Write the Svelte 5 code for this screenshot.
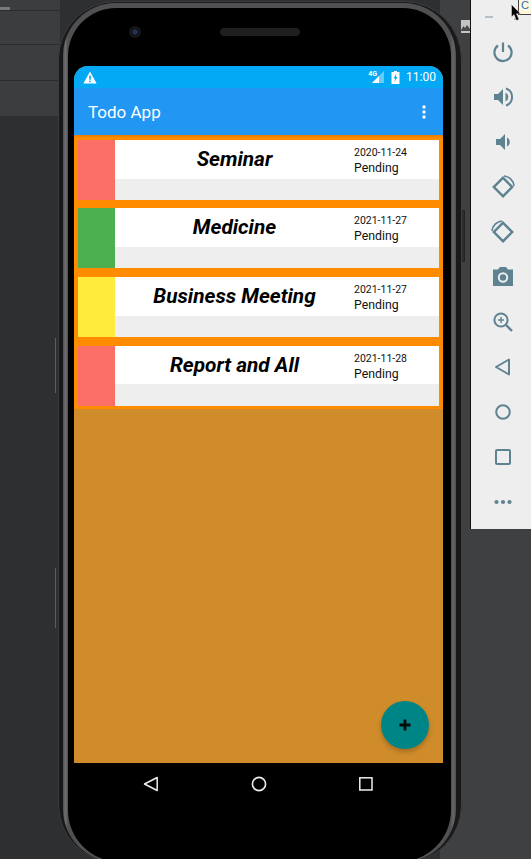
<script lang="ts">
  const todos = [
    { title: 'Seminar', date: '2020-11-24', status: 'Pending', color: '#fb6f66' },
    { title: 'Medicine', date: '2021-11-27', status: 'Pending', color: '#4caf50' },
    { title: 'Business Meeting', date: '2021-11-27', status: 'Pending', color: '#ffeb3b' },
    { title: 'Report and All', date: '2021-11-28', status: 'Pending', color: '#fb6f66' }
  ];
</script>

<div class="desktop">
  <div class="ide-left">
    <div class="ide-row corner"></div>
    <div class="ide-row"></div>
    <div class="ide-row"></div>
    <div class="ide-row last"></div>
  </div>
  <div class="ide-right">
    <div class="thumb">
      <svg width="9" height="13" viewBox="0 0 9 13">
        <path d="M0 10 L2.5 6 L4 8 L6 5 L9 9 V11 H0 Z" fill="#4a4a4c" />
      </svg>
    </div>
  </div>
  <span class="side-line one"></span>
  <span class="side-line two"></span>
  <span class="side-button"></span>

  <div class="phone">
    <div class="ring">
      <div class="bezel">
        <div class="earpiece-row">
          <span class="camera"></span>
          <span class="speaker"></span>
        </div>
        <div class="screen">
          <div class="statusbar">
            <svg class="warn" width="14" height="13" viewBox="0 0 14 13">
              <path d="M7 0.5 L13.6 12.5 H0.4 Z" fill="#fff" />
              <rect x="6.2" y="4.5" width="1.6" height="4.2" fill="#03a9f4" />
              <rect x="6.2" y="9.6" width="1.6" height="1.6" fill="#03a9f4" />
            </svg>
            <span class="spacer"></span>
            <span class="net">4G</span>
            <svg width="12" height="12" viewBox="0 0 12 12" class="signal">
              <path d="M12 0 V12 H0 Z" fill="#fff" opacity="0.4" />
              <path d="M7 5 V12 H0 Z" fill="#fff" />
            </svg>
            <svg width="9" height="13" viewBox="0 0 9 13" class="battery">
              <path d="M3 0 H6 V1 H8.5 V13 H0.5 V1 H3 Z" fill="#fff" />
              <path d="M5.3 2.5 L2.6 7.5 H4.2 L3.6 11 L6.4 6 H4.8 Z" fill="#03a9f4" />
            </svg>
            <span class="clock">11:00</span>
          </div>
          <header class="appbar">
            <span class="app-title">Todo App</span>
            <svg width="4" height="14" viewBox="0 0 4 14">
              <circle cx="2" cy="2" r="1.7" fill="#fff" />
              <circle cx="2" cy="7" r="1.7" fill="#fff" />
              <circle cx="2" cy="12" r="1.7" fill="#fff" />
            </svg>
          </header>
          <main class="content">
            <div class="list">
              {#each todos as todo}
                <article class="card">
                  <div class="strip" style="background: {todo.color}"></div>
                  <div class="body">
                    <div class="top">
                      <h2>{todo.title}</h2>
                      <div class="meta">
                        <small>{todo.date}</small>
                        <span>{todo.status}</span>
                      </div>
                    </div>
                    <div class="bottom"></div>
                  </div>
                </article>
              {/each}
            </div>
            <button class="fab" aria-label="Add">
              <svg width="12" height="12" viewBox="0 0 12 12">
                <path d="M4.6 0.5 H7.4 V4.6 H11.5 V7.4 H7.4 V11.5 H4.6 V7.4 H0.5 V4.6 H4.6 Z" fill="#0a0a0a" />
              </svg>
            </button>
          </main>
        </div>
        <nav class="navbar">
          <svg width="16" height="16" viewBox="0 0 16 16">
            <path d="M14.2 1.5 V14.5 L1.5 8 Z" fill="none" stroke="#eee" stroke-width="1.5" stroke-linejoin="round" />
          </svg>
          <svg width="16" height="16" viewBox="0 0 16 16">
            <circle cx="8" cy="8" r="6.6" fill="none" stroke="#eee" stroke-width="1.6" />
          </svg>
          <svg width="14" height="14" viewBox="0 0 14 14">
            <rect x="0.8" y="0.8" width="12.2" height="12.2" fill="none" stroke="#eee" stroke-width="1.5" />
          </svg>
        </nav>
      </div>
    </div>
  </div>

  <aside class="emu">
    <div class="emu-top"><span class="minimize"></span><span class="close-dot"></span></div>
    <div class="emu-icons">
      <svg viewBox="0 0 24 24"><path d="M12 2.5 V12 M7 5.5 A8.6 8.6 0 1 0 17 5.5" fill="none" stroke="#5f8291" stroke-width="2.2" /></svg>
      <svg viewBox="0 0 24 24"><path d="M3 9 V15 H7 L12 20 V4 L7 9 Z M14.5 7.5 A5 5 0 0 1 14.5 16.5 Z" fill="#5f8291" /><path d="M15 3.5 A9 9 0 0 1 15 20.5" fill="none" stroke="#5f8291" stroke-width="2" /></svg>
      <svg viewBox="0 0 24 24"><path d="M5 9 V15 H9 L14 20 V4 L9 9 Z M16 7.5 A5 5 0 0 1 16 16.5 Z" fill="#5f8291" /></svg>
      <svg viewBox="0 0 24 24"><rect x="5.5" y="5.5" width="13" height="13" transform="rotate(45 12 12)" fill="none" stroke="#5f8291" stroke-width="2.4" /><path d="M13 1 A11 11 0 0 1 23 11" fill="none" stroke="#5f8291" stroke-width="1.6" /></svg>
      <svg viewBox="0 0 24 24"><rect x="5.5" y="5.5" width="13" height="13" transform="rotate(45 12 12)" fill="none" stroke="#5f8291" stroke-width="2.4" /><path d="M1 11 A11 11 0 0 1 11 1" fill="none" stroke="#5f8291" stroke-width="1.6" /></svg>
      <svg viewBox="0 0 24 24"><path d="M9 2 L7 4.5 H2 V21 H22 V4.5 H17 L15 2 Z" fill="#5f8291" /><circle cx="12" cy="12.5" r="4.2" fill="none" stroke="#eee" stroke-width="2" /></svg>
      <svg viewBox="0 0 24 24"><circle cx="10" cy="10" r="6.6" fill="none" stroke="#5f8291" stroke-width="2" /><path d="M15 15 L21 21" stroke="#5f8291" stroke-width="2.4" /><path d="M10 7 V13 M7 10 H13" stroke="#5f8291" stroke-width="1.4" /></svg>
      <svg viewBox="0 0 24 24"><path d="M18 4.5 V19.5 L5 12 Z" fill="none" stroke="#5f8291" stroke-width="2" stroke-linejoin="round" /></svg>
      <svg viewBox="0 0 24 24"><circle cx="12" cy="12" r="6.8" fill="none" stroke="#5f8291" stroke-width="2" /></svg>
      <svg viewBox="0 0 24 24"><rect x="5" y="5" width="14" height="14" rx="1" fill="none" stroke="#5f8291" stroke-width="2" /></svg>
      <svg viewBox="0 0 24 24"><circle cx="5.5" cy="12" r="2.1" fill="#5f8291" /><circle cx="12" cy="12" r="2.1" fill="#5f8291" /><circle cx="18.5" cy="12" r="2.1" fill="#5f8291" /></svg>
    </div>
  </aside>

  <div class="tooltip">C</div>
  <svg class="cursor" width="10" height="18" viewBox="0 0 10 18">
    <path d="M0.5 0.5 V13 L3 10.5 L5.5 16.5 L8 15.5 L5.5 9.8 H9.5 Z" fill="#000" stroke="#fff" stroke-width="0.4" />
  </svg>
</div>

<style>
  :global(body) {
    margin: 0;
    background: #2e2f31;
  }
  .desktop {
    position: relative;
    width: 531px;
    height: 859px;
    overflow: hidden;
    background: #2e2f31;
    font-family: Roboto, 'Liberation Sans', sans-serif;
  }
  .ide-left {
    position: absolute;
    left: 0;
    top: 0;
    width: 60px;
    height: 116px;
    display: grid;
    grid-template-rows: 11px 34px 36px 35px;
    background: #3c3d3f;
  }
  .ide-row {
    box-sizing: border-box;
    border-bottom: 1px solid #2b2c2d;
  }
  .ide-row.last {
    border-bottom: 0;
  }
  .ide-row.corner {
    background: linear-gradient(#77797b, #77797b) no-repeat 0 7px / 10px 3px;
  }
  .ide-right {
    position: absolute;
    left: 440px;
    top: 0;
    width: 91px;
    height: 859px;
    background: #3f4042;
  }
  .thumb {
    position: absolute;
    left: 21px;
    top: 20px;
    width: 9px;
    height: 13px;
    background: #c4c4c4;
  }
  .thumb svg {
    display: block;
  }
  .side-line {
    position: absolute;
    left: 55px;
    width: 1px;
    background: #5c5d5f;
  }
  .side-line.one {
    top: 338px;
    height: 55px;
  }
  .side-line.two {
    top: 568px;
    height: 60px;
  }
  .side-button {
    position: absolute;
    left: 462px;
    top: 210px;
    width: 3px;
    height: 52px;
    box-sizing: border-box;
    border: 1px solid #232324;
    border-left: 0;
    background: #2c2c2e;
  }
  .phone {
    position: absolute;
    left: 58px;
    top: 1px;
    width: 404px;
    height: 862px;
    box-sizing: border-box;
    padding: 1px 5px 0 4px;
    border: 1px solid #3e3e40;
    border-radius: 58px;
    background: #19191a;
  }
  .ring {
    height: 100%;
    box-sizing: border-box;
    padding: 5px 5px 0;
    border-radius: 53px;
    background: linear-gradient(90deg, #505052, #6e6e70 2.5px, #505052 5px, #505052 388px, #666668 390px, #4f4f51 393px);
  }
  .bezel {
    height: 100%;
    box-sizing: border-box;
    padding: 0 8px 0 6px;
    border-radius: 48px 48px 52px 52px;
    background: #000;
    display: flex;
    flex-direction: column;
  }
  .earpiece-row {
    height: 58px;
    flex: none;
    position: relative;
  }
  .camera {
    position: absolute;
    left: 55px;
    top: 18px;
    width: 12px;
    height: 12px;
    border-radius: 50%;
    background: radial-gradient(circle, #27305c 0 2px, #161618 3px);
  }
  .speaker {
    position: absolute;
    left: 146px;
    top: 20px;
    width: 80px;
    height: 8px;
    border-radius: 4px;
    background: #1f1f20;
  }
  .screen {
    width: 369px;
    height: 697px;
    flex: none;
    display: flex;
    flex-direction: column;
    border-radius: 14px 14px 0 0;
    overflow: hidden;
    background: #d08c2a;
  }
  .statusbar {
    height: 22px;
    flex: none;
    display: flex;
    align-items: center;
    box-sizing: border-box;
    padding: 0 0 0 9px;
    background: #03a9f4;
    color: #fff;
  }
  .spacer {
    flex: 1;
  }
  .net {
    font-size: 7px;
    font-weight: 700;
    margin: 0 -5px 7px 0;
  }
  .battery {
    margin: 0 6px 0 7px;
  }
  .clock {
    font-size: 12px;
    margin-right: 7px;
  }
  .appbar {
    height: 47px;
    flex: none;
    display: flex;
    align-items: center;
    justify-content: space-between;
    box-sizing: border-box;
    padding: 0 17px 0 14px;
    background: #2196f3;
    color: #fff;
  }
  .app-title {
    font-size: 17px;
  }
  .content {
    flex: 1;
    position: relative;
  }
  .list {
    display: flex;
    flex-direction: column;
    gap: 8.6px;
    padding: 4.8px 4px 3.9px;
    background: linear-gradient(#df7c00, #ff8c00 3px);
  }
  .card {
    height: 60px;
    display: flex;
  }
  .strip {
    width: 37px;
    flex: none;
  }
  .body {
    flex: 1;
    display: flex;
    flex-direction: column;
  }
  .top {
    height: 38.9px;
    flex: none;
    display: flex;
    background: #fff;
  }
  .top h2 {
    flex: 1;
    margin: 0;
    padding-bottom: 1px;
    align-self: center;
    text-align: center;
    font-size: 20.8px;
    font-style: italic;
    font-weight: 700;
    color: #000;
  }
  .meta {
    width: 85px;
    flex: none;
    display: flex;
    flex-direction: column;
    padding-top: 6px;
    color: #111;
  }
  .meta small {
    font-size: 10.5px;
    line-height: 13px;
  }
  .meta span {
    font-size: 12.3px;
    line-height: 18px;
  }
  .bottom {
    flex: 1;
    background: #eee;
  }
  .fab {
    position: absolute;
    right: 14px;
    bottom: 14px;
    width: 48px;
    height: 48px;
    padding: 0;
    border: 0;
    border-radius: 50%;
    display: grid;
    place-items: center;
    background: #008587;
    box-shadow: 0 3px 5px rgba(0, 0, 0, 0.22);
  }
  .navbar {
    height: 42px;
    width: 367px;
    flex: none;
    display: grid;
    grid-template-columns: 16px 16px 14px;
    justify-content: center;
    column-gap: 92px;
    align-items: center;
  }
  .emu {
    position: absolute;
    left: 470px;
    top: 0;
    width: 61px;
    height: 529px;
    box-sizing: border-box;
    border-left: 1px solid #111;
    background: #eeeeee;
    display: flex;
    flex-direction: column;
  }
  .emu-top {
    height: 40px;
    flex: none;
    position: relative;
  }
  .minimize {
    position: absolute;
    left: 14px;
    top: 16px;
    width: 8px;
    height: 2px;
    background: #b4c1c7;
  }
  .close-dot {
    position: absolute;
    left: 43px;
    top: 18px;
    width: 2px;
    height: 2px;
    background: #a9b9c1;
  }
  .emu-icons {
    display: flex;
    flex-direction: column;
    gap: 21px;
    align-items: center;
    padding-left: 4px;
    padding-right: 1px;
  }
  .emu-icons svg {
    width: 24px;
    height: 24px;
  }
  .tooltip {
    position: absolute;
    left: 518px;
    top: 0;
    width: 13px;
    height: 15px;
    box-sizing: border-box;
    padding-left: 2px;
    background: #fff8dc;
    border: 1px solid #444;
    border-top: 0;
    border-right: 0;
    color: #2a6fc0;
    font: 11px/11px 'Liberation Sans', sans-serif;
  }
  .cursor {
    position: absolute;
    left: 511px;
    top: 4px;
  }
</style>
